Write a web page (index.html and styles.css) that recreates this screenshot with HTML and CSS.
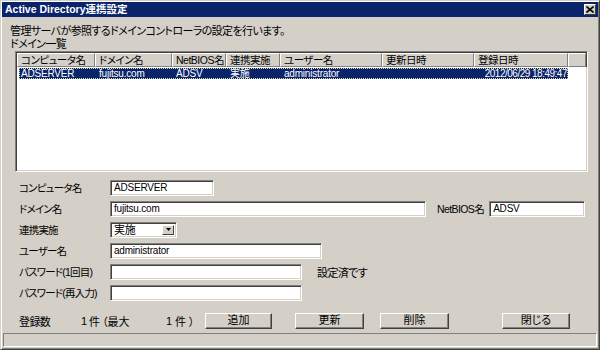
FILE: index.html
```html
<!DOCTYPE html>
<html lang="ja">
<head>
    <meta charset="UTF-8">
    <title>Active Directory連携設定</title>
    <link rel="stylesheet" href="styles.css">
</head>
<body>
    <div class="window">
        <div class="titlebar">
            <span class="title">Active Directory連携設定</span>
            <span class="close">
                <svg width="8" height="7" viewBox="0 0 8 7"><path d="M0.5 0.5L7.5 6.5M7.5 0.5L0.5 6.5" stroke="#000" stroke-width="1.6"/></svg>
            </span>
        </div>
        <div class="content">
            <p class="msg">管理サーバが参照するドメインコントローラの設定を行います。</p>
            <p class="msg">ドメイン一覧</p>

            <div class="listview">
                <div class="lv-head">
                    <span>コンピュータ名</span>
                    <span>ドメイン名</span>
                    <span>NetBIOS名</span>
                    <span>連携実施</span>
                    <span>ユーザー名</span>
                    <span>更新日時</span>
                    <span>登録日時</span>
                    <span></span>
                </div>
                <div class="lv-row selected">
                    <span>ADSERVER</span>
                    <span>fujitsu.com</span>
                    <span>ADSV</span>
                    <span>実施</span>
                    <span>administrator</span>
                    <span></span>
                    <span class="date">2012/06/29 18:49:47</span>
                </div>
            </div>

            <div class="form">
                <div class="frow">
                    <label>コンピュータ名</label>
                    <div class="tb w-pc">ADSERVER</div>
                </div>
                <div class="frow">
                    <label>ドメイン名</label>
                    <div class="tb w-domain">fujitsu.com</div>
                    <label class="nb-label">NetBIOS名</label>
                    <div class="tb w-nb">ADSV</div>
                </div>
                <div class="frow">
                    <label>連携実施</label>
                    <div class="tb select">実施<span class="arrow"><svg width="5" height="3" viewBox="0 0 5 3"><path d="M0 0H5L2.5 3Z" fill="#000"/></svg></span></div>
                </div>
                <div class="frow">
                    <label>ユーザー名</label>
                    <div class="tb w-user">administrator</div>
                </div>
                <div class="frow">
                    <label>パスワード(1回目)</label>
                    <div class="tb w-pw"></div>
                    <span class="note">設定済です</span>
                </div>
                <div class="frow">
                    <label>パスワード(再入力)</label>
                    <div class="tb w-pw"></div>
                </div>
            </div>

            <div class="footer">
                <span class="f-lbl">登録数</span>
                <span class="f-n1">1</span>
                <span class="f-k1">件</span>
                <span class="f-max">（最大</span>
                <span class="f-n2">1</span>
                <span class="f-k2">件</span>
                <span class="f-end">）</span>
                <button class="btn b-add">追加</button>
                <button class="btn b-upd">更新</button>
                <button class="btn b-del">削除</button>
                <button class="btn b-close">閉じる</button>
            </div>
        </div>
        <div class="statusbar"></div>
    </div>
</body>
</html>
```

FILE: styles.css
```css
*{
    margin: 0;
    padding: 0;
    box-sizing: border-box;
}
body{
    width: 600px;
    height: 350px;
    background: #d4d0c8;
    font-family: "Liberation Sans", "Noto Sans CJK JP", sans-serif;
    font-size: 11px;
    color: #000;
    font-feature-settings: "palt";
}
.window{
    width: 600px;
    height: 350px;
    border: 1px solid;
    border-color: #d4d0c8 #404040 #404040 #d4d0c8;
    padding: 1px;
    box-shadow: inset 1px 1px #fff, inset -1px -1px #808080;
    display: flex;
    flex-direction: column;
}

/* タイトルバー */
.titlebar{
    height: 15px;
    background: #0a246a;
    display: flex;
    align-items: center;
    justify-content: space-between;
    padding: 0 2px 0 3px;
}
.title{
    color: #fff;
    font-weight: bold;
    font-size: 10.5px;
    line-height: 15px;
}
.close{
    width: 12px;
    height: 11px;
    background: #d4d0c8;
    border: 1px solid;
    border-color: #fff #404040 #404040 #fff;
    display: flex;
    align-items: center;
    justify-content: center;
}

.content{
    padding-left: 8px;
}
.msg{
    line-height: 13px;
    letter-spacing: -0.6px;
}
.msg:first-child{
    margin-top: 8px;
}

/* 一覧 */
.listview{
    margin-left: 5px;
    width: 573px;
    height: 121px;
    background: #fff;
    border: 1px solid;
    border-color: #808080 #fff #fff #808080;
    box-shadow: inset 1px 1px #404040, inset -1px -1px #d4d0c8;
    padding: 1px;
}
.lv-head,
.lv-row{
    display: grid;
    grid-template-columns: 78px 77px 54px 54px 102px 92px 94px 18px;
}
.lv-head span{
    height: 14px;
    line-height: 13px;
    font-size: 10.5px;
    background: #d4d0c8;
    border: 1px solid;
    border-color: #fff #808080 #808080 #fff;
    box-shadow: 1px 0 #404040;
    padding-left: 3px;
    white-space: nowrap;
    overflow: hidden;
    letter-spacing: -0.5px;
}
.lv-row{
    grid-template-columns: 78px 77px 54px 54px 102px 92px 94px;
    width: 549px;
    height: 11px;
    margin: 1px 0 0 2px;
    line-height: 11px;
    font-size: 10px;
    letter-spacing: -0.2px;
}
.lv-row span{
    padding-left: 2px;
    white-space: nowrap;
}
.lv-row .date{
    text-align: right;
    padding-right: 3px;
    letter-spacing: -0.5px;
}
.selected{
    background: #0a246a;
    color: #fff;
    outline: 1px dotted #d8d8a0;
    outline-offset: -1px;
}

/* 入力欄 */
.form{
    margin-top: 5px;
    padding-left: 9px;
}
.frow{
    height: 21px;
    display: flex;
    align-items: center;
}
.frow label{
    width: 91px;
    font-size: 10.5px;
    letter-spacing: -0.8px;
}
.tb{
    height: 16px;
    background: #fff;
    border: 1px solid;
    border-color: #808080 #fff #fff #808080;
    box-shadow: inset 1px 1px #404040, inset -1px -1px #d4d0c8;
    padding-left: 3px;
    line-height: 14px;
    font-size: 10px;
    letter-spacing: -0.2px;
}
.w-pc{ width: 104px; }
.w-domain{ width: 316px; }
.w-nb{ width: 96px; }
.w-user{ width: 212px; }
.w-pw{ width: 192px; }
.frow .nb-label{
    width: auto;
    margin: 0 5px 0 11px;
    letter-spacing: -0.6px;
}
.select{
    width: 67px;
    position: relative;
    font-size: 11px;
}
.arrow{
    position: absolute;
    right: 2px;
    top: 2px;
    width: 12px;
    height: 10px;
    background: #d4d0c8;
    border: 1px solid;
    border-color: #fff #404040 #404040 #fff;
    display: flex;
    align-items: center;
    justify-content: center;
}
.note{
    margin-left: 15px;
    letter-spacing: -0.6px;
}

/* 下部 */
.footer{
    margin-top: 7px;
    height: 21px;
    padding-left: 9px;
    display: flex;
    align-items: center;
}
.f-lbl{ width: 62px; letter-spacing: -0.6px; }
.f-n1{ width: 8px; }
.f-k1{ width: 13px; }
.f-max{ width: 64px; }
.f-n2{ width: 9px; }
.f-k2{ width: 14px; }
.f-end{ width: 16px; }
.btn{
    height: 16px;
    font: inherit;
    background: #d4d0c8;
    border: 1px solid;
    border-color: #fff #404040 #404040 #fff;
    box-shadow: inset -1px -1px #808080;
    line-height: 13px;
}
.b-add{ width: 67px; }
.b-upd{ width: 69px; margin-left: 23px; }
.b-del{ width: 69px; margin-left: 16px; }
.b-close{ width: 68px; margin-left: 53px; }

.statusbar{
    margin: auto 1px 1px;
    height: 14px;
    border: 1px solid;
    border-color: #808080 #fff #fff #808080;
}
```
